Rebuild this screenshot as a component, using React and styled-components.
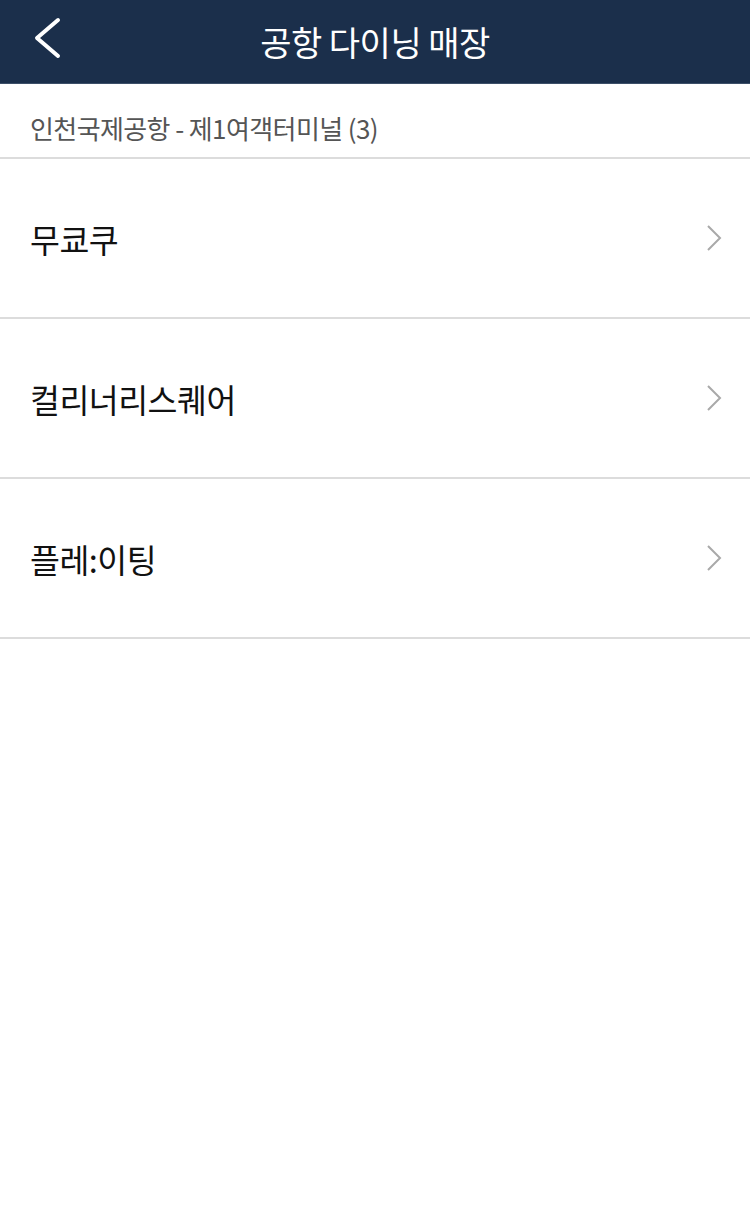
import React from "react";
import styled, { createGlobalStyle } from "styled-components";

const GlobalStyle = createGlobalStyle`
  body {
    margin: 0;
    background: #ffffff;
    font-family: "Noto Sans CJK KR", "Liberation Sans", sans-serif;
  }
`;

const stores = ["무쿄쿠", "컬리너리스퀘어", "플레:이팅"];

const App = () => {
  return (
    <Page>
      <GlobalStyle />
      <Header>
        <BackButton aria-label="back">
          <svg width="30" height="42" viewBox="0 0 30 42">
            <path d="M26 3 L5 21 L26 39" fill="none" stroke="#ffffff" strokeWidth="4" strokeLinecap="round" strokeLinejoin="round" />
          </svg>
        </BackButton>
        <Title>공항 다이닝 매장</Title>
      </Header>
      <SectionLabel>인천국제공항 - 제1여객터미널 (3)</SectionLabel>
      <List>
        {stores.map((name) => (
          <Row key={name}>
            <RowName>{name}</RowName>
            <svg width="16" height="28" viewBox="0 0 16 28">
              <path d="M2 2 L14 14 L2 26" fill="none" stroke="#a9a9a9" strokeWidth="2" />
            </svg>
          </Row>
        ))}
      </List>
    </Page>
  );
};

const Page = styled.div`
  width: 750px;
  min-height: 1224px;
  background: #ffffff;
`;

const Header = styled.header`
  position: relative;
  height: 83px;
  background: #1b2f4b;
  border-bottom: 1px solid #3c4f68;
  display: flex;
  align-items: center;
  justify-content: center;
`;

const BackButton = styled.button`
  position: absolute;
  left: 32px;
  top: 17px;
  background: none;
  border: none;
  padding: 0;
  display: flex;
`;

const Title = styled.h1`
  margin: 0;
  color: #ffffff;
  font-size: 34px;
  font-weight: 400;
  letter-spacing: -0.5px;
`;

const SectionLabel = styled.div`
  height: 75px;
  box-sizing: border-box;
  padding: 31px 30px 0;
  line-height: 1;
  font-size: 26px;
  color: #555555;
  letter-spacing: -0.6px;
  border-bottom: 2px solid #dcdcdc;
`;

const List = styled.ul`
  margin: 0;
  padding: 0;
  list-style: none;
`;

const Row = styled.li`
  height: 160px;
  box-sizing: border-box;
  padding: 0 28px 0 30px;
  display: flex;
  align-items: center;
  justify-content: space-between;
  border-bottom: 2px solid #dcdcdc;
`;

const RowName = styled.span`
  font-size: 32.5px;
  color: #111111;
  letter-spacing: -0.5px;
`;

export default App;
